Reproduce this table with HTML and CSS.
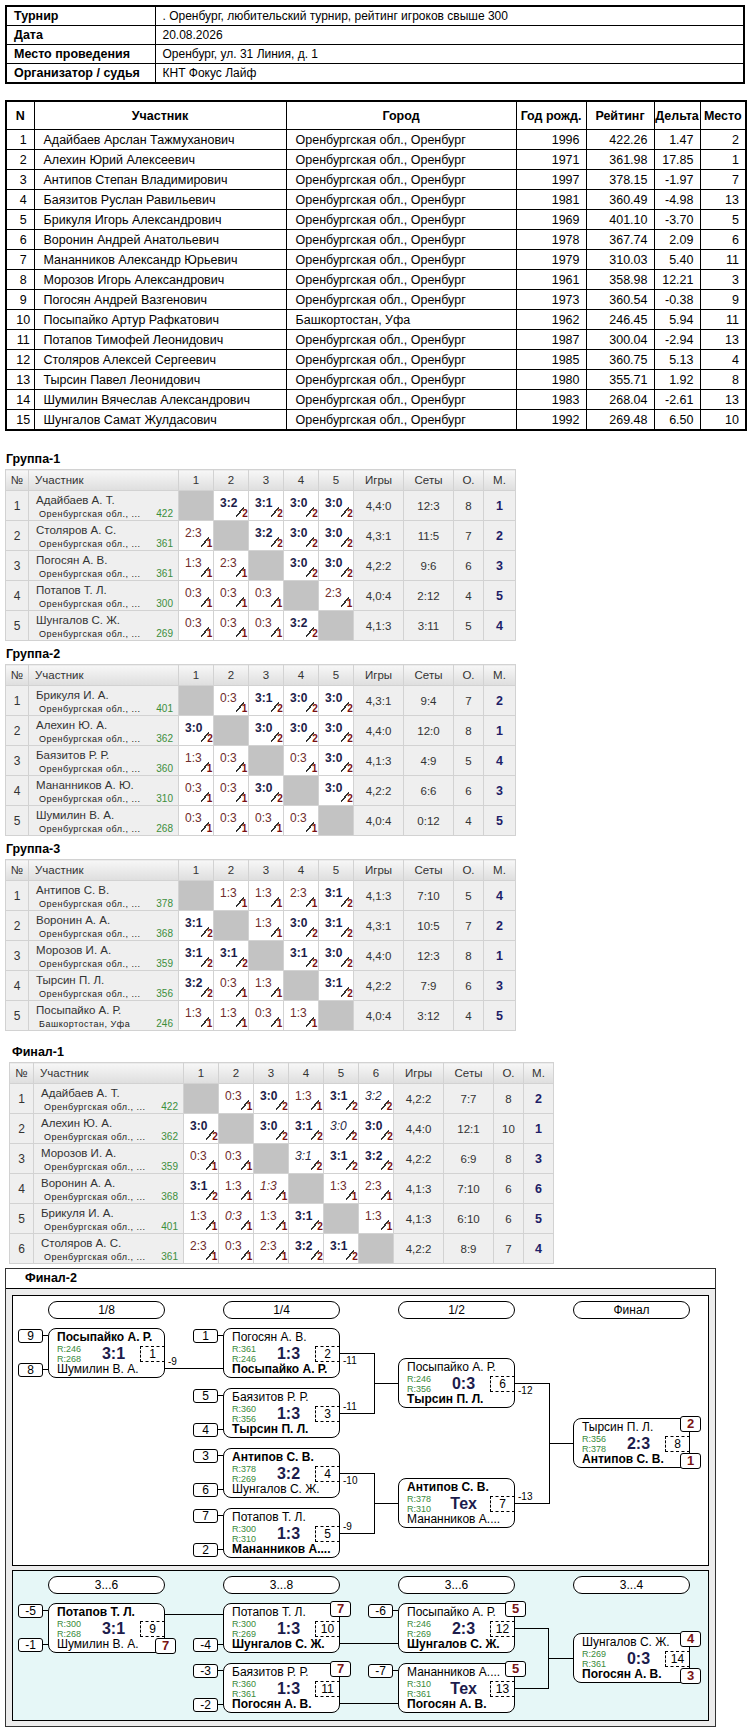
FILE: index.html
```html
<!DOCTYPE html>
<html lang="ru">
<head>
<meta charset="utf-8">
<title>Турнир</title>
<link rel="stylesheet" href="styles.css">
</head>
<body>
<table class="info">
<colgroup><col class="w149"><col></colgroup>
<tr><th>Турнир</th><td>. Оренбург, любительский турнир, рейтинг игроков свыше 300</td></tr>
<tr><th>Дата</th><td>20.08.2026</td></tr>
<tr><th>Место проведения</th><td>Оренбург, ул. 31 Линия, д. 1</td></tr>
<tr><th>Организатор / судья</th><td>КНТ Фокус Лайф</td></tr>
</table>

<table class="main">
<colgroup><col class="w28"><col class="w252"><col class="w230"><col class="w70"><col class="w68"><col class="w46"><col class="w46"></colgroup>
<tr><th>N</th><th>Участник</th><th>Город</th><th>Год рожд.</th><th>Рейтинг</th><th>Дельта</th><th>Место</th></tr>
<tr><td class="ctr">1</td><td>Адайбаев Арслан Тажмуханович</td><td>Оренбургская обл., Оренбург</td><td class="r">1996</td><td class="r">422.26</td><td class="r">1.47</td><td class="r">2</td></tr>
<tr><td class="ctr">2</td><td>Алехин Юрий Алексеевич</td><td>Оренбургская обл., Оренбург</td><td class="r">1971</td><td class="r">361.98</td><td class="r">17.85</td><td class="r">1</td></tr>
<tr><td class="ctr">3</td><td>Антипов Степан Владимирович</td><td>Оренбургская обл., Оренбург</td><td class="r">1997</td><td class="r">378.15</td><td class="r">-1.97</td><td class="r">7</td></tr>
<tr><td class="ctr">4</td><td>Баязитов Руслан Равильевич</td><td>Оренбургская обл., Оренбург</td><td class="r">1981</td><td class="r">360.49</td><td class="r">-4.98</td><td class="r">13</td></tr>
<tr><td class="ctr">5</td><td>Брикуля Игорь Александрович</td><td>Оренбургская обл., Оренбург</td><td class="r">1969</td><td class="r">401.10</td><td class="r">-3.70</td><td class="r">5</td></tr>
<tr><td class="ctr">6</td><td>Воронин Андрей Анатольевич</td><td>Оренбургская обл., Оренбург</td><td class="r">1978</td><td class="r">367.74</td><td class="r">2.09</td><td class="r">6</td></tr>
<tr><td class="ctr">7</td><td>Мананников Александр Юрьевич</td><td>Оренбургская обл., Оренбург</td><td class="r">1979</td><td class="r">310.03</td><td class="r">5.40</td><td class="r">11</td></tr>
<tr><td class="ctr">8</td><td>Морозов Игорь Александрович</td><td>Оренбургская обл., Оренбург</td><td class="r">1961</td><td class="r">358.98</td><td class="r">12.21</td><td class="r">3</td></tr>
<tr><td class="ctr">9</td><td>Погосян Андрей Вазгенович</td><td>Оренбургская обл., Оренбург</td><td class="r">1973</td><td class="r">360.54</td><td class="r">-0.38</td><td class="r">9</td></tr>
<tr><td class="ctr">10</td><td>Посыпайко Артур Рафкатович</td><td>Башкортостан, Уфа</td><td class="r">1962</td><td class="r">246.45</td><td class="r">5.94</td><td class="r">11</td></tr>
<tr><td class="ctr">11</td><td>Потапов Тимофей Леонидович</td><td>Оренбургская обл., Оренбург</td><td class="r">1987</td><td class="r">300.04</td><td class="r">-2.94</td><td class="r">13</td></tr>
<tr><td class="ctr">12</td><td>Столяров Алексей Сергеевич</td><td>Оренбургская обл., Оренбург</td><td class="r">1985</td><td class="r">360.75</td><td class="r">5.13</td><td class="r">4</td></tr>
<tr><td class="ctr">13</td><td>Тырсин Павел Леонидович</td><td>Оренбургская обл., Оренбург</td><td class="r">1980</td><td class="r">355.71</td><td class="r">1.92</td><td class="r">8</td></tr>
<tr><td class="ctr">14</td><td>Шумилин Вячеслав Александрович</td><td>Оренбургская обл., Оренбург</td><td class="r">1983</td><td class="r">268.04</td><td class="r">-2.61</td><td class="r">13</td></tr>
<tr><td class="ctr">15</td><td>Шунгалов Самат Жулдасович</td><td>Оренбургская обл., Оренбург</td><td class="r">1992</td><td class="r">269.48</td><td class="r">6.50</td><td class="r">10</td></tr>
</table>

<div class="gt first">Группа-1</div>
<table class="grp">
<colgroup><col class="w23"><col class="w150"><col class="w35"><col class="w35"><col class="w35"><col class="w35"><col class="w35"><col class="w50"><col class="w50"><col class="w30"><col class="w32"></colgroup>
<tr class="hd"><th>№</th><th class="tl">Участник</th><th>1</th><th>2</th><th>3</th><th>4</th><th>5</th><th>Игры</th><th>Сеты</th><th>О.</th><th>М.</th></tr>
<tr><td class="no">1</td><td class="n"><div class="nm">Адайбаев А. Т.</div><div class="rg"><span>Оренбургская обл., ...</span><em>422</em></div></td><td class="x"></td><td class="c w"><span>3:2</span><i></i><b>2</b></td><td class="c w"><span>3:1</span><i></i><b>2</b></td><td class="c w"><span>3:0</span><i></i><b>2</b></td><td class="c w"><span>3:0</span><i></i><b>2</b></td><td class="g">4,4:0</td><td class="g">12:3</td><td class="g">8</td><td class="pl">1</td></tr>
<tr><td class="no">2</td><td class="n"><div class="nm">Столяров А. С.</div><div class="rg"><span>Оренбургская обл., ...</span><em>361</em></div></td><td class="c l"><span>2:3</span><i></i><b>1</b></td><td class="x"></td><td class="c w"><span>3:2</span><i></i><b>2</b></td><td class="c w"><span>3:0</span><i></i><b>2</b></td><td class="c w"><span>3:0</span><i></i><b>2</b></td><td class="g">4,3:1</td><td class="g">11:5</td><td class="g">7</td><td class="pl">2</td></tr>
<tr><td class="no">3</td><td class="n"><div class="nm">Погосян А. В.</div><div class="rg"><span>Оренбургская обл., ...</span><em>361</em></div></td><td class="c l"><span>1:3</span><i></i><b>1</b></td><td class="c l"><span>2:3</span><i></i><b>1</b></td><td class="x"></td><td class="c w"><span>3:0</span><i></i><b>2</b></td><td class="c w"><span>3:0</span><i></i><b>2</b></td><td class="g">4,2:2</td><td class="g">9:6</td><td class="g">6</td><td class="pl">3</td></tr>
<tr><td class="no">4</td><td class="n"><div class="nm">Потапов Т. Л.</div><div class="rg"><span>Оренбургская обл., ...</span><em>300</em></div></td><td class="c l"><span>0:3</span><i></i><b>1</b></td><td class="c l"><span>0:3</span><i></i><b>1</b></td><td class="c l"><span>0:3</span><i></i><b>1</b></td><td class="x"></td><td class="c l"><span>2:3</span><i></i><b>1</b></td><td class="g">4,0:4</td><td class="g">2:12</td><td class="g">4</td><td class="pl">5</td></tr>
<tr><td class="no">5</td><td class="n"><div class="nm">Шунгалов С. Ж.</div><div class="rg"><span>Оренбургская обл., ...</span><em>269</em></div></td><td class="c l"><span>0:3</span><i></i><b>1</b></td><td class="c l"><span>0:3</span><i></i><b>1</b></td><td class="c l"><span>0:3</span><i></i><b>1</b></td><td class="c w"><span>3:2</span><i></i><b>2</b></td><td class="x"></td><td class="g">4,1:3</td><td class="g">3:11</td><td class="g">5</td><td class="pl">4</td></tr>
</table>

<div class="gt">Группа-2</div>
<table class="grp">
<colgroup><col class="w23"><col class="w150"><col class="w35"><col class="w35"><col class="w35"><col class="w35"><col class="w35"><col class="w50"><col class="w50"><col class="w30"><col class="w32"></colgroup>
<tr class="hd"><th>№</th><th class="tl">Участник</th><th>1</th><th>2</th><th>3</th><th>4</th><th>5</th><th>Игры</th><th>Сеты</th><th>О.</th><th>М.</th></tr>
<tr><td class="no">1</td><td class="n"><div class="nm">Брикуля И. А.</div><div class="rg"><span>Оренбургская обл., ...</span><em>401</em></div></td><td class="x"></td><td class="c l"><span>0:3</span><i></i><b>1</b></td><td class="c w"><span>3:1</span><i></i><b>2</b></td><td class="c w"><span>3:0</span><i></i><b>2</b></td><td class="c w"><span>3:0</span><i></i><b>2</b></td><td class="g">4,3:1</td><td class="g">9:4</td><td class="g">7</td><td class="pl">2</td></tr>
<tr><td class="no">2</td><td class="n"><div class="nm">Алехин Ю. А.</div><div class="rg"><span>Оренбургская обл., ...</span><em>362</em></div></td><td class="c w"><span>3:0</span><i></i><b>2</b></td><td class="x"></td><td class="c w"><span>3:0</span><i></i><b>2</b></td><td class="c w"><span>3:0</span><i></i><b>2</b></td><td class="c w"><span>3:0</span><i></i><b>2</b></td><td class="g">4,4:0</td><td class="g">12:0</td><td class="g">8</td><td class="pl">1</td></tr>
<tr><td class="no">3</td><td class="n"><div class="nm">Баязитов Р. Р.</div><div class="rg"><span>Оренбургская обл., ...</span><em>360</em></div></td><td class="c l"><span>1:3</span><i></i><b>1</b></td><td class="c l"><span>0:3</span><i></i><b>1</b></td><td class="x"></td><td class="c l"><span>0:3</span><i></i><b>1</b></td><td class="c w"><span>3:0</span><i></i><b>2</b></td><td class="g">4,1:3</td><td class="g">4:9</td><td class="g">5</td><td class="pl">4</td></tr>
<tr><td class="no">4</td><td class="n"><div class="nm">Мананников А. Ю.</div><div class="rg"><span>Оренбургская обл., ...</span><em>310</em></div></td><td class="c l"><span>0:3</span><i></i><b>1</b></td><td class="c l"><span>0:3</span><i></i><b>1</b></td><td class="c w"><span>3:0</span><i></i><b>2</b></td><td class="x"></td><td class="c w"><span>3:0</span><i></i><b>2</b></td><td class="g">4,2:2</td><td class="g">6:6</td><td class="g">6</td><td class="pl">3</td></tr>
<tr><td class="no">5</td><td class="n"><div class="nm">Шумилин В. А.</div><div class="rg"><span>Оренбургская обл., ...</span><em>268</em></div></td><td class="c l"><span>0:3</span><i></i><b>1</b></td><td class="c l"><span>0:3</span><i></i><b>1</b></td><td class="c l"><span>0:3</span><i></i><b>1</b></td><td class="c l"><span>0:3</span><i></i><b>1</b></td><td class="x"></td><td class="g">4,0:4</td><td class="g">0:12</td><td class="g">4</td><td class="pl">5</td></tr>
</table>

<div class="gt">Группа-3</div>
<table class="grp">
<colgroup><col class="w23"><col class="w150"><col class="w35"><col class="w35"><col class="w35"><col class="w35"><col class="w35"><col class="w50"><col class="w50"><col class="w30"><col class="w32"></colgroup>
<tr class="hd"><th>№</th><th class="tl">Участник</th><th>1</th><th>2</th><th>3</th><th>4</th><th>5</th><th>Игры</th><th>Сеты</th><th>О.</th><th>М.</th></tr>
<tr><td class="no">1</td><td class="n"><div class="nm">Антипов С. В.</div><div class="rg"><span>Оренбургская обл., ...</span><em>378</em></div></td><td class="x"></td><td class="c l"><span>1:3</span><i></i><b>1</b></td><td class="c l"><span>1:3</span><i></i><b>1</b></td><td class="c l"><span>2:3</span><i></i><b>1</b></td><td class="c w"><span>3:1</span><i></i><b>2</b></td><td class="g">4,1:3</td><td class="g">7:10</td><td class="g">5</td><td class="pl">4</td></tr>
<tr><td class="no">2</td><td class="n"><div class="nm">Воронин А. А.</div><div class="rg"><span>Оренбургская обл., ...</span><em>368</em></div></td><td class="c w"><span>3:1</span><i></i><b>2</b></td><td class="x"></td><td class="c l"><span>1:3</span><i></i><b>1</b></td><td class="c w"><span>3:0</span><i></i><b>2</b></td><td class="c w"><span>3:1</span><i></i><b>2</b></td><td class="g">4,3:1</td><td class="g">10:5</td><td class="g">7</td><td class="pl">2</td></tr>
<tr><td class="no">3</td><td class="n"><div class="nm">Морозов И. А.</div><div class="rg"><span>Оренбургская обл., ...</span><em>359</em></div></td><td class="c w"><span>3:1</span><i></i><b>2</b></td><td class="c w"><span>3:1</span><i></i><b>2</b></td><td class="x"></td><td class="c w"><span>3:1</span><i></i><b>2</b></td><td class="c w"><span>3:0</span><i></i><b>2</b></td><td class="g">4,4:0</td><td class="g">12:3</td><td class="g">8</td><td class="pl">1</td></tr>
<tr><td class="no">4</td><td class="n"><div class="nm">Тырсин П. Л.</div><div class="rg"><span>Оренбургская обл., ...</span><em>356</em></div></td><td class="c w"><span>3:2</span><i></i><b>2</b></td><td class="c l"><span>0:3</span><i></i><b>1</b></td><td class="c l"><span>1:3</span><i></i><b>1</b></td><td class="x"></td><td class="c w"><span>3:1</span><i></i><b>2</b></td><td class="g">4,2:2</td><td class="g">7:9</td><td class="g">6</td><td class="pl">3</td></tr>
<tr><td class="no">5</td><td class="n"><div class="nm">Посыпайко А. Р.</div><div class="rg"><span>Башкортостан, Уфа</span><em>246</em></div></td><td class="c l"><span>1:3</span><i></i><b>1</b></td><td class="c l"><span>1:3</span><i></i><b>1</b></td><td class="c l"><span>0:3</span><i></i><b>1</b></td><td class="c l"><span>1:3</span><i></i><b>1</b></td><td class="x"></td><td class="g">4,0:4</td><td class="g">3:12</td><td class="g">4</td><td class="pl">5</td></tr>
</table>

<div class="gt fin">Финал-1</div>
<table class="grp fin">
<colgroup><col class="w24"><col class="w150"><col class="w35"><col class="w35"><col class="w35"><col class="w35"><col class="w35"><col class="w35"><col class="w50"><col class="w50"><col class="w30"><col class="w30"></colgroup>
<tr class="hd"><th>№</th><th class="tl">Участник</th><th>1</th><th>2</th><th>3</th><th>4</th><th>5</th><th>6</th><th>Игры</th><th>Сеты</th><th>О.</th><th>М.</th></tr>
<tr><td class="no">1</td><td class="n"><div class="nm">Адайбаев А. Т.</div><div class="rg"><span>Оренбургская обл., ...</span><em>422</em></div></td><td class="x"></td><td class="c l"><span>0:3</span><i></i><b>1</b></td><td class="c w"><span>3:0</span><i></i><b>2</b></td><td class="c l"><span>1:3</span><i></i><b>1</b></td><td class="c w"><span>3:1</span><i></i><b>2</b></td><td class="c w it"><span>3:2</span><i></i><b>2</b></td><td class="g">4,2:2</td><td class="g">7:7</td><td class="g">8</td><td class="pl">2</td></tr>
<tr><td class="no">2</td><td class="n"><div class="nm">Алехин Ю. А.</div><div class="rg"><span>Оренбургская обл., ...</span><em>362</em></div></td><td class="c w"><span>3:0</span><i></i><b>2</b></td><td class="x"></td><td class="c w"><span>3:0</span><i></i><b>2</b></td><td class="c w"><span>3:1</span><i></i><b>2</b></td><td class="c w it"><span>3:0</span><i></i><b>2</b></td><td class="c w"><span>3:0</span><i></i><b>2</b></td><td class="g">4,4:0</td><td class="g">12:1</td><td class="g">10</td><td class="pl">1</td></tr>
<tr><td class="no">3</td><td class="n"><div class="nm">Морозов И. А.</div><div class="rg"><span>Оренбургская обл., ...</span><em>359</em></div></td><td class="c l"><span>0:3</span><i></i><b>1</b></td><td class="c l"><span>0:3</span><i></i><b>1</b></td><td class="x"></td><td class="c w it"><span>3:1</span><i></i><b>2</b></td><td class="c w"><span>3:1</span><i></i><b>2</b></td><td class="c w"><span>3:2</span><i></i><b>2</b></td><td class="g">4,2:2</td><td class="g">6:9</td><td class="g">8</td><td class="pl">3</td></tr>
<tr><td class="no">4</td><td class="n"><div class="nm">Воронин А. А.</div><div class="rg"><span>Оренбургская обл., ...</span><em>368</em></div></td><td class="c w"><span>3:1</span><i></i><b>2</b></td><td class="c l"><span>1:3</span><i></i><b>1</b></td><td class="c l it"><span>1:3</span><i></i><b>1</b></td><td class="x"></td><td class="c l"><span>1:3</span><i></i><b>1</b></td><td class="c l"><span>2:3</span><i></i><b>1</b></td><td class="g">4,1:3</td><td class="g">7:10</td><td class="g">6</td><td class="pl">6</td></tr>
<tr><td class="no">5</td><td class="n"><div class="nm">Брикуля И. А.</div><div class="rg"><span>Оренбургская обл., ...</span><em>401</em></div></td><td class="c l"><span>1:3</span><i></i><b>1</b></td><td class="c l it"><span>0:3</span><i></i><b>1</b></td><td class="c l"><span>1:3</span><i></i><b>1</b></td><td class="c w"><span>3:1</span><i></i><b>2</b></td><td class="x"></td><td class="c l"><span>1:3</span><i></i><b>1</b></td><td class="g">4,1:3</td><td class="g">6:10</td><td class="g">6</td><td class="pl">5</td></tr>
<tr><td class="no">6</td><td class="n"><div class="nm">Столяров А. С.</div><div class="rg"><span>Оренбургская обл., ...</span><em>361</em></div></td><td class="c l"><span>2:3</span><i></i><b>1</b></td><td class="c l"><span>0:3</span><i></i><b>1</b></td><td class="c l"><span>2:3</span><i></i><b>1</b></td><td class="c w"><span>3:2</span><i></i><b>2</b></td><td class="c w"><span>3:1</span><i></i><b>2</b></td><td class="x"></td><td class="g">4,2:2</td><td class="g">8:9</td><td class="g">7</td><td class="pl">4</td></tr>
</table>

<section class="f2">
<div class="f2t">Финал-2</div>
<div class="f2b">
<div class="bk top">
<svg class="ln" width="696" height="269" viewBox="0 0 696 269">
<path d="M152 72.5H210M327 57.5H361.5V117.5H327M361.5 87.5H385M327 177.5H361.5V237.5H327M361.5 207.5H385M502 87.5H536.5V207.5H502M536.5 147.5H560"/>
</svg>
<div class="pill x1">1/8</div>
<div class="pill x2">1/4</div>
<div class="pill x3">1/2</div>
<div class="pill x4">Финал</div>

<div class="m x1 t32"><div class="p1 win">Посыпайко А. Р.</div><div class="r1">R:246</div><div class="sc">3:1</div><div class="r2">R:268</div><div class="nb">1</div><div class="p2">Шумилин В. А.</div><span class="sd st">9</span><span class="sd sb">8</span><span class="lb up2">-9</span></div>

<div class="m x2 t32"><div class="p1">Погосян А. В.</div><div class="r1">R:361</div><div class="sc">1:3</div><div class="r2">R:246</div><div class="nb">2</div><div class="p2 win">Посыпайко А. Р.</div><span class="sd st">1</span><span class="lb dn">-11</span></div>
<div class="m x2 t92"><div class="p1">Баязитов Р. Р.</div><div class="r1">R:360</div><div class="sc">1:3</div><div class="r2">R:356</div><div class="nb">3</div><div class="p2 win">Тырсин П. Л.</div><span class="sd st">5</span><span class="sd sb">4</span><span class="lb up">-11</span></div>
<div class="m x2 t152"><div class="p1 win">Антипов С. В.</div><div class="r1">R:378</div><div class="sc">3:2</div><div class="r2">R:269</div><div class="nb">4</div><div class="p2">Шунгалов С. Ж.</div><span class="sd st">3</span><span class="sd sb">6</span><span class="lb dn">-10</span></div>
<div class="m x2 t212"><div class="p1">Потапов Т. Л.</div><div class="r1">R:300</div><div class="sc">1:3</div><div class="r2">R:310</div><div class="nb">5</div><div class="p2 win">Мананников А....</div><span class="sd st">7</span><span class="sd sb">2</span><span class="lb up">-9</span></div>

<div class="m x3 t62"><div class="p1">Посыпайко А. Р.</div><div class="r1">R:246</div><div class="sc">0:3</div><div class="r2">R:356</div><div class="nb">6</div><div class="p2 win">Тырсин П. Л.</div><span class="lb dn">-12</span></div>
<div class="m x3 t182"><div class="p1 win">Антипов С. В.</div><div class="r1">R:378</div><div class="sc">Тех</div><div class="r2">R:310</div><div class="nb">7</div><div class="p2">Мананников А....</div><span class="lb up">-13</span></div>

<div class="m x4 t122"><div class="p1">Тырсин П. Л.</div><div class="r1">R:356</div><div class="sc">2:3</div><div class="r2">R:378</div><div class="nb">8</div><div class="p2 win">Антипов С. В.</div><span class="rs rt">2</span><span class="rs rb">1</span></div>
</div>

<div class="bk low">
<svg class="ln" width="696" height="149" viewBox="0 0 696 149">
<path d="M152 43.5H210M327 72.5H385M327 132.5H385M502 57.5H535.5V117.5H502M535.5 87.5H560"/>
</svg>
<div class="pill x1">3...6</div>
<div class="pill x2">3...8</div>
<div class="pill x3">3...6</div>
<div class="pill x4">3...4</div>

<div class="m x1 t32"><div class="p1 win">Потапов Т. Л.</div><div class="r1">R:300</div><div class="sc">3:1</div><div class="r2">R:268</div><div class="nb">9</div><div class="p2">Шумилин В. А.</div><span class="sd st">-5</span><span class="sd sb">-1</span><span class="rs rb">7</span></div>
<div class="m x2 t32"><div class="p1">Потапов Т. Л.</div><div class="r1">R:300</div><div class="sc">1:3</div><div class="r2">R:269</div><div class="nb">10</div><div class="p2 win">Шунгалов С. Ж.</div><span class="sd sb">-4</span><span class="rs rt">7</span></div>
<div class="m x2 t92"><div class="p1">Баязитов Р. Р.</div><div class="r1">R:360</div><div class="sc">1:3</div><div class="r2">R:361</div><div class="nb">11</div><div class="p2 win">Погосян А. В.</div><span class="sd st">-3</span><span class="sd sb">-2</span><span class="rs rt">7</span></div>
<div class="m x3 t32"><div class="p1">Посыпайко А. Р.</div><div class="r1">R:246</div><div class="sc">2:3</div><div class="r2">R:269</div><div class="nb">12</div><div class="p2 win">Шунгалов С. Ж.</div><span class="sd st">-6</span><span class="rs rt">5</span></div>
<div class="m x3 t92"><div class="p1">Мананников А....</div><div class="r1">R:310</div><div class="sc">Тех</div><div class="r2">R:361</div><div class="nb">13</div><div class="p2 win">Погосян А. В.</div><span class="sd st">-7</span><span class="rs rt">5</span></div>
<div class="m x4 t62"><div class="p1">Шунгалов С. Ж.</div><div class="r1">R:269</div><div class="sc">0:3</div><div class="r2">R:361</div><div class="nb">14</div><div class="p2 win">Погосян А. В.</div><span class="rs rt">4</span><span class="rs rb">3</span></div>
</div>
</div>
</section>
</body>
</html>
```

FILE: styles.css
```css
html, body {
  margin: 0;
  background: #fff;
}
body {
  padding: 5px 5px 0 5px;
  font-family: "Liberation Sans", Arial, sans-serif;
  color: #000;
  width: 740px;
}

/* info table */
.info {
  width: 740px;
  border-collapse: collapse;
  border: 2px solid #000;
  table-layout: fixed;
}
.w149 { width: 149px; }
.info th, .info td {
  border: 1px solid #000;
  height: 18px;
  padding: 0 7px;
  text-align: left;
  font-size: 12px;
  white-space: nowrap;
}
.info th { font-weight: bold; font-size: 12.5px; }

/* main table */
.main {
  width: 740px;
  margin-top: 16px;
  border-collapse: collapse;
  border: 2px solid #000;
  table-layout: fixed;
}
.w28 { width: 28px; }
.w252 { width: 252px; }
.w230 { width: 230px; }
.w70 { width: 70px; }
.w68 { width: 68px; }
.w46 { width: 46px; }
.main th {
  height: 27px;
  border: 1px solid #000;
  font-weight: bold;
  font-size: 12.5px;
  padding: 0;
}
.main td {
  height: 19px;
  border: 1px solid #000;
  font-size: 12.5px;
  padding: 0 6px 0 9px;
  white-space: nowrap;
  overflow: hidden;
}
.main td.r { text-align: right; padding: 0 6px 0 2px; }
.main td.ctr { text-align: center; padding: 0 0 0 6px; }

/* group titles */
.gt {
  font-weight: bold;
  font-size: 12.5px;
  height: 20px;
  line-height: 20px;
  padding-left: 1px;
  margin-top: 3px;
}
.gt.first { margin-top: 18px; }
.gt.fin { margin-top: 11px; padding-left: 7px; }

/* group tables */
.grp {
  border-collapse: collapse;
  table-layout: fixed;
  border: 1px solid #b0b0b0;
  font-size: 11.5px;
  color: #333;
}
.grp.fin { margin-left: 4px; }
.w23 { width: 23px; }
.w24 { width: 24px; }
.w150 { width: 150px; }
.w35 { width: 35px; }
.w50 { width: 50px; }
.w30 { width: 30px; }
.w32 { width: 32px; }
.grp tr { height: 30px; }
.grp tr.hd { height: 21px; }
.grp th, .grp td {
  border: 1px solid #d2d2d2;
  padding: 0;
}
.grp th {
  font-weight: normal;
  font-size: 11.5px;
  color: #333;
  text-align: center;
  background: linear-gradient(#f7f7f7, #dedede);
}
.grp th.tl { text-align: left; padding-left: 6px; }
.grp td.no {
  text-align: center;
  background: #efefef;
  font-size: 12px;
}
.grp td.n {
  background: #efefef;
  vertical-align: top;
  padding: 3px 5px 0 7px;
}
.nm {
  font-size: 11.5px;
  line-height: 13px;
  white-space: nowrap;
  color: #333;
}
.rg {
  display: flex;
  justify-content: space-between;
  align-items: baseline;
  margin-top: 1px;
  padding-left: 3px;
  font-size: 9px;
  line-height: 12px;
  letter-spacing: 0.5px;
  color: #222;
  white-space: nowrap;
}
.rg em {
  font-style: normal;
  font-size: 10px;
  letter-spacing: 0;
  color: #3b8e3b;
}
.grp td.x { background: #c3c3c3; }
.grp td.c {
  background: #fff;
  vertical-align: top;
  padding: 6px 0 0 6px;
  white-space: nowrap;
  font-size: 12px;
  line-height: 12px;
  overflow: hidden;
}
.c span { color: #6e2c2c; }
.c.w span { font-weight: bold; color: #1c1c48; }
.c.it span { font-style: italic; font-weight: normal; }
.c.w.it span { color: #2a2a45; }
.c i {
  display: inline-block;
  width: 8px;
  height: 10px;
  margin-left: -1px;
  vertical-align: -10px;
  background: linear-gradient(to bottom right, transparent calc(50% - 0.8px), #333 calc(50% - 0.8px), #333 calc(50% + 0.8px), transparent calc(50% + 0.8px));
}
.c b {
  font-size: 10px;
  line-height: 10px;
  color: #7a1010;
  vertical-align: -10px;
  margin-left: -2px;
}
.grp td.g {
  background: #efefef;
  text-align: center;
  font-size: 11.5px;
}
.grp td.pl {
  background: #efefef;
  text-align: center;
  font-weight: bold;
  font-size: 12.5px;
  color: #1e1e68;
}

/* Final-2 */
.f2 {
  width: 711px;
  box-sizing: border-box;
  margin-top: 4px;
  border: 1px solid #333;
  background: #ececec;
}
.f2t {
  background: #fff;
  height: 19px;
  line-height: 19px;
  border-bottom: 1px solid #000;
  font-weight: bold;
  font-size: 12.5px;
  padding-left: 19px;
}
.f2b {
  padding: 6px 6px 5px 6px;
  display: flex;
  flex-direction: column;
  gap: 4px;
}
.bk {
  position: relative;
  border: 1px solid #000;
  background: #fff;
  height: 269px;
  font-size: 12px;
}
.bk.low {
  background: #e6f7f7;
  height: 149px;
}
.ln {
  position: absolute;
  left: 0;
  top: 0;
}
.ln path {
  fill: none;
  stroke: #000;
  stroke-width: 1;
  shape-rendering: crispEdges;
}
.pill {
  position: absolute;
  top: 5px;
  width: 117px;
  height: 18px;
  box-sizing: border-box;
  border: 1px solid #000;
  border-radius: 9px;
  background: #fff;
  text-align: center;
  line-height: 16px;
  font-size: 12px;
}
.x1 { left: 35px; }
.x2 { left: 210px; }
.x3 { left: 385px; }
.x4 { left: 560px; }
.t32 { top: 32px; }
.t62 { top: 62px; }
.t92 { top: 92px; }
.t122 { top: 122px; }
.t152 { top: 152px; }
.t182 { top: 182px; }
.t212 { top: 212px; }

.m {
  position: absolute;
  width: 117px;
  height: 50px;
  box-sizing: border-box;
  border: 1px solid #000;
  border-radius: 8px;
  background: #fff;
  display: grid;
  grid-template-columns: 38px 1fr 24px;
  grid-template-rows: 15px 10px 10px 13px;
}
.p1, .p2 {
  grid-column: 1 / 4;
  padding-left: 8px;
  font-size: 12px;
  white-space: nowrap;
}
.p1 { grid-row: 1; line-height: 16px; }
.p2 { grid-row: 4; line-height: 11px; }
.win { font-weight: bold; }
.r1, .r2 {
  grid-column: 1;
  padding-left: 8px;
  font-size: 9px;
  line-height: 10px;
  color: #3a8a3a;
}
.r1 { grid-row: 2; }
.r2 { grid-row: 3; }
.sc {
  grid-column: 2;
  grid-row: 2 / 4;
  align-self: center;
  text-align: center;
  font-weight: bold;
  font-size: 16px;
  line-height: 20px;
  color: #1c1c4c;
}
.nb {
  grid-column: 3;
  grid-row: 2 / 4;
  align-self: center;
  height: 16px;
  margin-right: -1px;
  box-sizing: border-box;
  border: 1px dashed #000;
  text-align: center;
  line-height: 14px;
  font-size: 12px;
}
.sd {
  position: absolute;
  left: -31px;
  width: 25px;
  height: 14px;
  box-sizing: border-box;
  border: 1px solid #000;
  border-radius: 3px;
  background: #fff;
  text-align: center;
  font-size: 12px;
  line-height: 12px;
}
.sd::after {
  content: "";
  position: absolute;
  right: -6px;
  top: 5px;
  width: 5px;
  border-top: 1px solid #000;
}
.st { top: 0; }
.sb { bottom: 0; }
.rs {
  position: absolute;
  right: -12px;
  width: 21px;
  height: 16px;
  box-sizing: border-box;
  border: 1px solid #000;
  border-radius: 3px;
  background: #fff;
  text-align: center;
  font-weight: bold;
  font-size: 13px;
  line-height: 14px;
  color: #7a1414;
}
.rt { top: -3px; }
.rb { bottom: -2px; }
.lb {
  position: absolute;
  left: 119px;
  font-size: 10px;
  line-height: 11px;
}
.lb.up { top: 12px; }
.lb.dn { top: 26px; }
.lb.up2 { top: 27px; }
```
